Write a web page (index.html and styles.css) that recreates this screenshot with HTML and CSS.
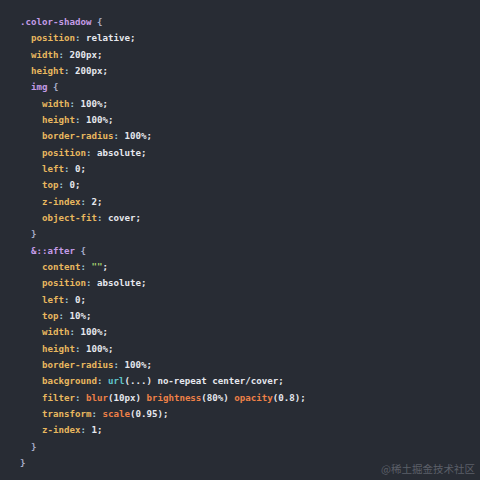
FILE: index.html
```html
<!DOCTYPE html>
<html lang="zh">
<head>
<meta charset="utf-8">
<link rel="stylesheet" href="styles.css">
</head>
<body>
<main class="editor">
<div class="code">
<div class="ln"><span class="sel">.color-shadow</span> <span class="br">{</span></div>
<div class="ln i1"><span class="p">position</span><span class="c">:</span> <span class="v">relative;</span></div>
<div class="ln i1"><span class="p">width</span><span class="c">:</span> <span class="v">200px;</span></div>
<div class="ln i1"><span class="p">height</span><span class="c">:</span> <span class="v">200px;</span></div>
<div class="ln i1"><span class="sel">img</span> <span class="br">{</span></div>
<div class="ln i2"><span class="p">width</span><span class="c">:</span> <span class="v">100%;</span></div>
<div class="ln i2"><span class="p">height</span><span class="c">:</span> <span class="v">100%;</span></div>
<div class="ln i2"><span class="p">border-radius</span><span class="c">:</span> <span class="v">100%;</span></div>
<div class="ln i2"><span class="p">position</span><span class="c">:</span> <span class="v">absolute;</span></div>
<div class="ln i2"><span class="p">left</span><span class="c">:</span> <span class="v">0;</span></div>
<div class="ln i2"><span class="p">top</span><span class="c">:</span> <span class="v">0;</span></div>
<div class="ln i2"><span class="p">z-index</span><span class="c">:</span> <span class="v">2;</span></div>
<div class="ln i2"><span class="p">object-fit</span><span class="c">:</span> <span class="v">cover;</span></div>
<div class="ln i1"><span class="br">}</span></div>
<div class="ln i1"><span class="sel">&amp;::after</span> <span class="br">{</span></div>
<div class="ln i2"><span class="p">content</span><span class="c">:</span> <span class="s">""</span><span class="v">;</span></div>
<div class="ln i2"><span class="p">position</span><span class="c">:</span> <span class="v">absolute;</span></div>
<div class="ln i2"><span class="p">left</span><span class="c">:</span> <span class="v">0;</span></div>
<div class="ln i2"><span class="p">top</span><span class="c">:</span> <span class="v">10%;</span></div>
<div class="ln i2"><span class="p">width</span><span class="c">:</span> <span class="v">100%;</span></div>
<div class="ln i2"><span class="p">height</span><span class="c">:</span> <span class="v">100%;</span></div>
<div class="ln i2"><span class="p">border-radius</span><span class="c">:</span> <span class="v">100%;</span></div>
<div class="ln i2"><span class="p">background</span><span class="c">:</span> <span class="u">url</span><span class="v">(...) no-repeat center/cover;</span></div>
<div class="ln i2"><span class="p">filter</span><span class="c">:</span> <span class="f">blur</span><span class="v">(10px)</span> <span class="f">brightness</span><span class="v">(80%)</span> <span class="f">opacity</span><span class="v">(0.8);</span></div>
<div class="ln i2"><span class="p">transform</span><span class="c">:</span> <span class="f">scale</span><span class="v">(0.95);</span></div>
<div class="ln i2"><span class="p">z-index</span><span class="c">:</span> <span class="v">1;</span></div>
<div class="ln i1"><span class="br">}</span></div>
<div class="ln"><span class="br">}</span></div>
</div>
<span class="mark">@稀土掘金技术社区</span>
</main>
</body>
</html>
```

FILE: styles.css
```css
html, body {
  margin: 0;
  padding: 0;
  background: #282c34;
}
.editor {
  position: relative;
  width: 480px;
  height: 480px;
  box-sizing: border-box;
  padding: 14px 0 0 20px;
  background: #282c34;
  overflow: hidden;
}
.code {
  display: flex;
  flex-direction: column;
  font-family: "DejaVu Sans Mono", monospace;
  font-size: 9.14px;
  font-weight: 600;
  color: #e6e8ee;
}
.ln {
  height: 16.33px;
  line-height: 16.33px;
  white-space: pre;
}
.i1 { padding-left: 11px; }
.i2 { padding-left: 22px; }
.sel { color: #c49be6; }
.br { color: #a7adc9; }
.p { color: #e8b85f; }
.c { color: #9fc6d4; }
.v { color: #e6e8ee; }
.s { color: #a5d16f; }
.u { color: #5fc4c9; }
.f { color: #ee8047; }
.mark {
  position: absolute;
  right: 5px;
  bottom: 4px;
  font-family: "Noto Sans CJK SC", sans-serif;
  font-size: 10.5px;
  line-height: 14px;
  color: #5b5f68;
}
```
